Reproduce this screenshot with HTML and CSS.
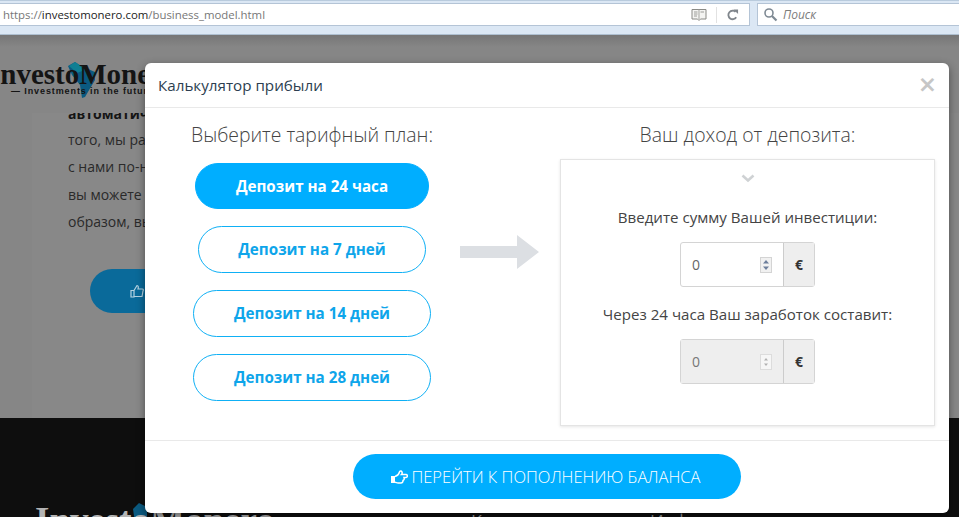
FILE: index.html
```html
<!DOCTYPE html>
<html lang="ru">
<head>
<meta charset="utf-8">
<title>InvestoMonero</title>
<link rel="stylesheet" href="styles.css">
</head>
<body>
<div class="toolbar">
  <div class="address">
    <div class="url"><span class="url-dim">https://</span><span class="url-host">investomonero.com</span><span class="url-dim">/business_model.html</span></div>
    <svg class="tool-icon" width="16" height="14" viewBox="0 0 16 14"><path d="M1 1.500h14v9.500H9.500L8 12.500 6.500 11H1z" fill="#f4f4f2" stroke="#8a8a86"/><path d="M8 1.500V11" stroke="#a5a5a1"/><path d="M3 4h3.500M3 6h3.500M3 8h3M9.500 4h3.500" stroke="#9c9c98"/></svg>
    <span class="tool-sep"></span>
    <svg class="tool-icon" width="13" height="14" viewBox="0 0 14 14"><path d="M11 9.500A4.600 4.600 0 1 1 10.300 3.600" fill="none" stroke="#80868c" stroke-width="2"/><path d="M8 1h5v5z" fill="#80868c"/></svg>
  </div>
  <div class="search">
    <svg width="15" height="15" viewBox="0 0 15 15"><circle cx="6" cy="6" r="4" fill="#fff" stroke="#7f8a94" stroke-width="1.600"/><path d="M9 9l4.500 4.500" stroke="#7f8a94" stroke-width="2.200"/></svg>
    <span>Поиск</span>
  </div>
</div>
<div class="page">
  <header class="site-head">
    <div class="logo">
      <svg class="logo-gem" width="30" height="38" viewBox="0 0 30 38"><path d="M0 4 7 0l6 4 14 6v8L17 35l-3 1-2-13-8-10z" fill="#0b5a80"/><path d="M1 4 7 0l6 4 1 5-5 2z" fill="#0f7f93"/></svg>
      <div class="logo-name">InvestoMonero</div>
      <div class="logo-tag">— Investments in the future</div>
    </div>
  </header>
  <section class="site-main">
    <p class="site-lead">автоматически</p>
    <p>того, мы растём</p>
    <p>с нами по-настоящему</p>
    <p>вы можете начать</p>
    <p>образом, вы получаете</p>
    <div class="site-btn">
      <svg width="14" height="14" viewBox="0 0 14 14"><path d="M1 6.500h3v6.500H1zM4 6.500 7 1.500c1.500 0 1.500 2 1 3.500h4.500c1 0 1 1.500.5 2L12 12.500H4" fill="none" stroke="#b5d3e2" stroke-width="1.200"/></svg>
    </div>
  </section>
  <footer class="site-foot">
    <div class="foot-logo">
      <svg class="foot-gem" width="14" height="20" viewBox="0 0 14 20"><path d="M0 6 6 0l8 4v16H2z" fill="#0b5a80"/></svg>
      <span class="foot-name">InvestoMonero</span>
    </div>
    <div class="foot-col foot-col-a">Контакты</div>
    <div class="foot-col">Информация о компании</div>
  </footer>
</div>

<div class="modal">
  <div class="modal-head">
    <h4>Калькулятор прибыли</h4>
    <span class="close">×</span>
  </div>
  <div class="modal-body">
    <div class="plans">
      <h3>Выберите тарифный план:</h3>
      <a class="plan plan-active">Депозит на 24 часа</a>
      <a class="plan plan-7">Депозит на 7 дней</a>
      <a class="plan plan-wide">Депозит на 14 дней</a>
      <a class="plan plan-wide">Депозит на 28 дней</a>
    </div>
    <svg class="arrow" width="79" height="34" viewBox="0 0 79 34"><path d="M0 11h57V0l22 17-22 17V23H0z" fill="#dcdfe3"/></svg>
    <div class="result">
      <h3>Ваш доход от депозита:</h3>
      <div class="result-box">
        <svg class="chevron" width="14" height="9" viewBox="0 0 14 9"><path d="M1.500 1.500 7 6.500l5.500-5" fill="none" stroke="#cfd2d4" stroke-width="2.600"/></svg>
        <p class="field-label">Введите сумму Вашей инвестиции:</p>
        <div class="field">
          <div class="field-input"><span>0</span><span class="spin"><svg width="12" height="16" viewBox="0 0 12 16"><rect x=".5" y=".5" width="11" height="15" fill="#f1f1f1" stroke="#d4d4d4"/><path d="M6 3 9 6.500H3zM6 13 3 9.500h6z" fill="#6d7f9c"/></svg></span></div>
          <div class="field-addon">€</div>
        </div>
        <p class="field-label">Через 24 часа Ваш заработок составит:</p>
        <div class="field field-off">
          <div class="field-input"><span>0</span><span class="spin"><svg width="12" height="16" viewBox="0 0 12 16"><rect x=".5" y=".5" width="11" height="15" fill="#f6f6f6" stroke="#dcdcdc"/><path d="M6 4 8 6.500H4zM6 12 4 9.500h4z" fill="#b0b0b0"/></svg></span></div>
          <div class="field-addon">€</div>
        </div>
      </div>
    </div>
  </div>
  <div class="modal-foot">
    <a class="cta">
      <svg width="17" height="14" viewBox="0 0 17 14"><rect x="0" y="6" width="4" height="7" fill="#fff"/><path d="M4 6.500C6 6 8 4 8.500 2c.2-1.200 2-1.300 2.500 0 .3 1 0 2-.5 2.500H15c1.800 0 1.800 3 0 3h-2c.6 1.500-.2 3-1 3 .1 1.300-.7 2.500-2 2.500H7c-1 0-2-.7-3-.7" fill="none" stroke="#fff" stroke-width="1.500"/></svg>
      <span>ПЕРЕЙТИ К ПОПОЛНЕНИЮ БАЛАНСА</span>
    </a>
  </div>
</div>
</body>
</html>
```
FILE: styles.css
```css
* { box-sizing: border-box; }
html, body { margin: 0; height: 517px; overflow: hidden; }
body { position: relative; display: flex; flex-direction: column; font-family: "Open Sans", sans-serif; color: #333; background: #868686; }

.toolbar { flex: none; height: 35px; display: flex; gap: 7px; padding: 2px 0 9px; background: #dbe7f4; border-top: 1px solid #b9cbdd; border-bottom: 1px solid #aebfd0; }
.address, .search { height: 23px; background: #fff; display: flex; align-items: center; border-bottom: 1px solid #b4c4d6; border-top: 1px solid #b4c4d6; }
.address { width: 750px; padding: 0 10px 0 3px; border-right: 1px solid #b4c4d6; }
.url { flex: 1; font: 11.400px "Open Sans", sans-serif; white-space: nowrap; }
.url-dim { color: #777; }
.url-host { color: #222; }
.tool-icon { flex: none; }
.tool-sep { width: 1px; height: 16px; margin: 0 9px; background: #e2e2e2; }
.search { flex: 1; padding-left: 5px; gap: 5px; border-left: 1px solid #b4c4d6; font: italic 12px "Open Sans", sans-serif; color: #7c7c7c; }

.page { flex: 1; display: flex; flex-direction: column; min-height: 0; }
.site-head { flex: none; height: 78px; background: linear-gradient(#767676, #868686 12px); overflow: hidden; }
.logo { position: relative; width: 145px; height: 78px; overflow: hidden; padding-top: 25px; }
.logo-gem { position: absolute; left: 68px; top: 27px; }
.logo-name { position: relative; margin-left: -11px; font: 700 29px/29px "Liberation Serif", serif; color: #141414; white-space: nowrap; }
.logo-tag { position: relative; margin: -3px 0 0 11px; font: 700 9px/10px "Liberation Sans", sans-serif; letter-spacing: .900px; color: #141414; white-space: nowrap; }

.site-main { flex: 1; background: linear-gradient(90deg, #868686 32px, #888 32px); padding: 0 0 0 68px; font-size: 14px; line-height: 27.400px; color: #2a2a2a; overflow: hidden; }
.site-main p { margin: 0; white-space: nowrap; }
.site-main .site-lead { font-weight: 700; color: #151515; height: 18px; margin-top: -5px; line-height: 12px; }
.site-btn { width: 120px; height: 44px; margin: 33px 0 0 22px; padding: 15px 0 0 40px; border-radius: 22px; background: #0a6a9a; line-height: 0; }

.site-foot { flex: none; height: 99px; background: #0e0e0e; display: flex; padding: 85px 0 0 35px; gap: 24px; overflow: hidden; }
.foot-logo { position: relative; width: 412px; font: 700 37px/36px "Liberation Serif", serif; color: #b4b4b4; white-space: nowrap; }
.foot-name { position: relative; }
.foot-gem { position: absolute; left: 98px; top: 0; }
.foot-col { margin-top: 3px; font: 18px/30px "Open Sans", sans-serif; color: #999; white-space: nowrap; }
.foot-col-a { width: 155px; }

.modal { position: absolute; left: 145px; top: 63px; width: 804px; height: 450px; background: #fff; border-radius: 6px; display: flex; flex-direction: column; box-shadow: 0 3px 9px rgba(0,0,0,.45); }
.modal-head { flex: none; height: 45px; padding: 0 12px 0 13px; border-bottom: 1px solid #e9e9e9; display: flex; align-items: center; justify-content: space-between; }
.modal-head h4 { margin: 0; font-size: 15.200px; font-weight: 400; color: #2c3e50; }
.close { font: 700 23px/23px "DejaVu Sans", sans-serif; color: #c6c6c6; margin-top: -2px; }

.modal-body { flex: 1; display: flex; min-height: 0; padding: 0 14px 0 0; }
.plans { flex: none; width: 334px; display: flex; flex-direction: column; align-items: center; }
h3 { margin: 0; font-size: 19.400px; line-height: 24px; font-weight: 300; color: #444; text-align: center; }
.plans h3 { margin: 15px 0 16px; white-space: nowrap; }
.plan { display: flex; align-items: center; justify-content: center; height: 47px; margin-bottom: 17px; padding-bottom: 1px; border-radius: 24px; border: 1px solid #0fb0f5; color: #0ea5ea; font-size: 15.200px; font-weight: 700; }
.plan-active { width: 234px; height: 46px; background: #00aeff; border-color: #00aeff; color: #fff; }
.plan-7 { width: 228px; }
.plan-wide { width: 238px; }
.arrow { flex: none; margin: 127px 21px 0 -19px; }
.result { flex: 1; }
.result h3 { height: 24px; margin: 15px 0 12px; }
.result-box { height: 267px; border: 1px solid #e4e4e4; box-shadow: 0 1px 3px rgba(0,0,0,.1); display: flex; flex-direction: column; align-items: center; padding-top: 14px; }
.chevron { flex: none; }
.field-label { margin: 24px 0 15px; font-size: 15.100px; line-height: 20px; color: #444; white-space: nowrap; }
.field + .field-label { margin: 17px 0 15px; }
.field { display: flex; width: 135px; height: 45px; border: 1px solid #d4d4d4; border-radius: 3px; font-size: 14px; flex: none; }
.field-input { flex: 1; display: flex; align-items: center; justify-content: space-between; padding: 0 11px; color: #666; }
.spin { display: flex; }
.field-addon { flex: none; width: 31px; display: flex; align-items: center; justify-content: center; background: #eee; border-left: 1px solid #ccc; color: #333; font-weight: 700; font-size: 14px; }
.field-off .field-input { background: #eee; color: #777; }

.modal-foot { flex: none; height: 73px; border-top: 1px solid #e9e9e9; display: flex; justify-content: center; padding-top: 13px; }
.cta { width: 388px; height: 45px; border-radius: 23px; background: #00aeff; color: #fff; display: flex; align-items: center; justify-content: center; gap: 3px; padding-right: 2px; font-size: 16.500px; font-weight: 300; white-space: nowrap; }
```
